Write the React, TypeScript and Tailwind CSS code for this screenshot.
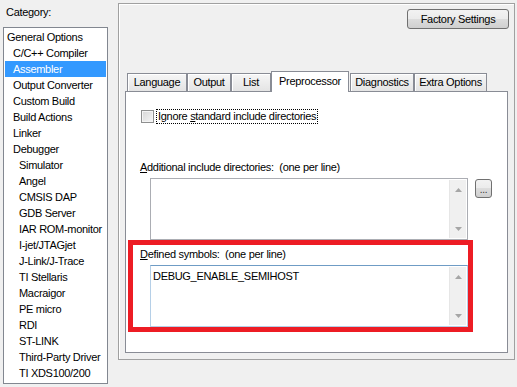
import React from 'react';

const categories: { label: string; level: number }[] = [
  { label: 'General Options', level: 0 },
  { label: 'C/C++ Compiler', level: 1 },
  { label: 'Assembler', level: 1 },
  { label: 'Output Converter', level: 1 },
  { label: 'Custom Build', level: 1 },
  { label: 'Build Actions', level: 1 },
  { label: 'Linker', level: 1 },
  { label: 'Debugger', level: 1 },
  { label: 'Simulator', level: 2 },
  { label: 'Angel', level: 2 },
  { label: 'CMSIS DAP', level: 2 },
  { label: 'GDB Server', level: 2 },
  { label: 'IAR ROM-monitor', level: 2 },
  { label: 'I-jet/JTAGjet', level: 2 },
  { label: 'J-Link/J-Trace', level: 2 },
  { label: 'TI Stellaris', level: 2 },
  { label: 'Macraigor', level: 2 },
  { label: 'PE micro', level: 2 },
  { label: 'RDI', level: 2 },
  { label: 'ST-LINK', level: 2 },
  { label: 'Third-Party Driver', level: 2 },
  { label: 'TI XDS100/200', level: 2 },
];

const tabs = [
  { label: 'Language', w: 'w-[60px]' },
  { label: 'Output', w: 'w-[44px]' },
  { label: 'List', w: 'w-[40px]' },
  { label: 'Preprocessor', w: 'w-[78px]', active: true },
  { label: 'Diagnostics', w: 'w-[64px] ml-[1px]' },
  { label: 'Extra Options', w: 'w-[73px]' },
];

const indent = ['pl-[2px]', 'pl-[8px]', 'pl-[14px]'];

const ScrollBar = () => (
  <div className="w-[17px] h-full bg-[#f0f0f0] border-l border-[#e6e6e6] flex flex-col justify-between items-center pt-[8px] pb-[7px]">
    <svg width="7" height="4" viewBox="0 0 7 4">
      <path d="M3.5 0 L7 4 H0 Z" fill="#a6a6a6" />
    </svg>
    <svg width="7" height="4" viewBox="0 0 7 4">
      <path d="M0 0 H7 L3.5 4 Z" fill="#a6a6a6" />
    </svg>
  </div>
);

const App = () => {
  return (
    <div className="w-[517px] h-[387px] bg-[#f0f0f0] flex overflow-hidden text-[11px] tracking-[-0.3px] text-black font-['Liberation_Sans',Arial,sans-serif]">
      {/* category tree */}
      <div className="w-[118px] pl-[3px] flex flex-col">
        <div className="h-[27px] pl-[3px] pt-[6px] leading-[13px]">Category:</div>
        <div className="w-[105px] h-[357px] border border-[#828790] bg-white pt-[1px] px-[1px]">
          {categories.map((c) => (
            <div
              key={c.label}
              className={`h-[16px] leading-[16px] whitespace-nowrap ${indent[c.level]} ${
                c.label === 'Assembler' ? 'bg-[#3399ff] text-white' : ''
              }`}
            >
              {c.label}
            </div>
          ))}
        </div>
      </div>

      {/* options frame */}
      <div className="mt-[3px] w-[397px] h-[357px] border border-[#a0a0a0] shadow-[inset_1px_1px_0_#ffffff] flex flex-col">
        <div className="flex justify-end pt-[5px] pr-[5px]">
          <button className="w-[102px] h-[20px] rounded-[3px] border border-[#707070] bg-[linear-gradient(#f2f2f2_0%,#ebebeb_50%,#dddddd_50%,#cfcfcf_100%)] leading-[18px] text-center">
            Factory Settings
          </button>
        </div>

        {/* tabs */}
        <div className="mt-[42px] ml-[8px] h-[20px] flex items-end relative z-10">
          {tabs.map((t) =>
            t.active ? (
              <div
                key={t.label}
                className={`${t.w} h-[21px] -mb-[1px] bg-white border border-b-0 border-[#898c95] text-center leading-[18px]`}
              >
                {t.label}
              </div>
            ) : (
              <div
                key={t.label}
                className={`${t.w} h-[18px] border border-b-0 border-[#898c95] bg-[linear-gradient(#f6f6f6,#e4e4e4)] shadow-[inset_1px_1px_0_#ffffff] text-center leading-[17px]`}
              >
                {t.label}
              </div>
            )
          )}
        </div>

        <div className="ml-[6px] w-[383px] h-[262px] border border-[#898c95] bg-white flex flex-col">
          <div className="mt-[17px] ml-[15px] h-[15px] flex items-center">
            <div className="w-[13px] h-[13px] border border-[#8e8f8f] bg-[linear-gradient(135deg,#d6d6d6,#f6f6f6)] shadow-[inset_0_0_0_1px_#f4f4f4]" />
            <span className="ml-[3px] px-[1px] leading-[13px] outline-1 outline-dotted outline-black">
              Ignore <u>s</u>tandard include directories
            </span>
          </div>

          <div className="mt-[36px] ml-[14px] leading-[14px]">
            <u>A</u>dditional include directories:&nbsp; (one per line)
          </div>
          <div className="mt-[4px] ml-[24px] flex items-start">
            <div className="w-[318px] h-[62px] border border-[#abadb3] bg-white flex justify-end py-[1px] pr-[1px]">
              <ScrollBar />
            </div>
            <button className="ml-[7px] mt-[1px] w-[17px] h-[19px] rounded-[3px] border border-[#707070] bg-[linear-gradient(#f2f2f2_0%,#ebebeb_50%,#dddddd_50%,#cfcfcf_100%)] leading-[20px] text-[10px] text-center text-[#333]">
              ...
            </button>
          </div>

          {/* highlighted defined symbols */}
          <div className="ml-[2px] w-[345px] h-[92px] border-[5px] border-[#ed1c24] flex flex-col">
            <div className="pl-[7px] pt-[2px] leading-[14px]">
              <u>D</u>efined symbols:&nbsp; (one per line)
            </div>
            <div className="mt-[4px] ml-[17px] w-[318px] h-[62px] border border-[#b5cfe7] border-t-[#6f9cc5] bg-white flex py-[1px] pr-[1px]">
              <div className="flex-1 pl-[2px] pt-[3px] leading-[13px]">DEBUG_ENABLE_SEMIHOST</div>
              <ScrollBar />
            </div>
          </div>
        </div>
      </div>
    </div>
  );
};

export default App;
